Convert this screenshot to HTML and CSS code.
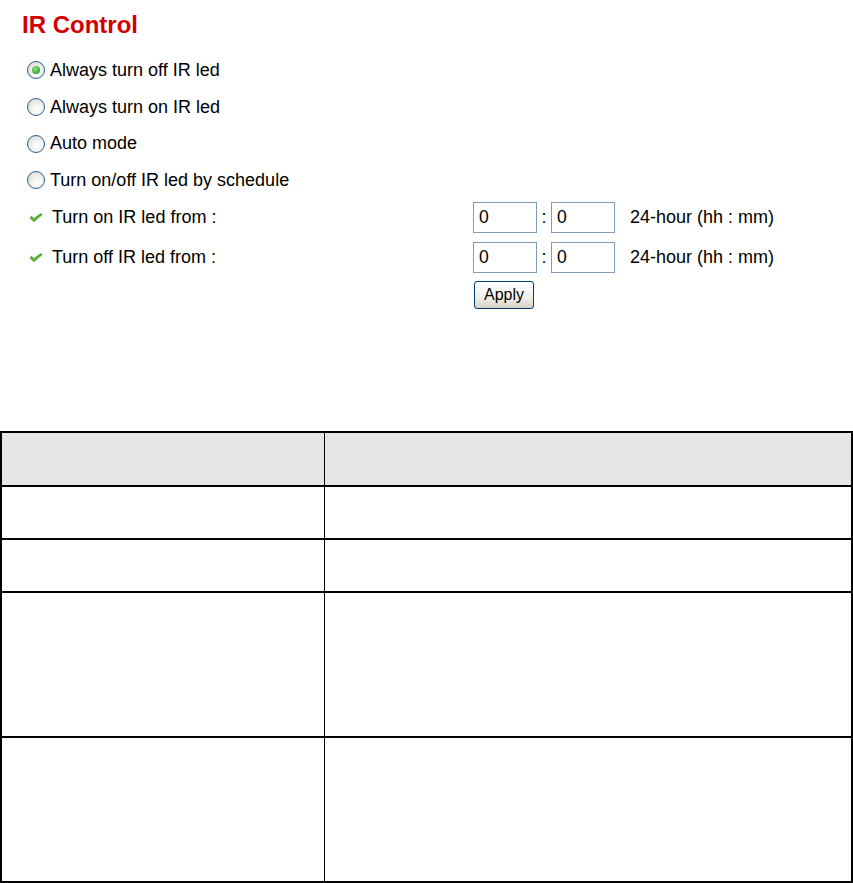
FILE: index.html
```html
<!DOCTYPE html>
<html lang="en">
<head>
    <meta charset="UTF-8">
    <title>IR Control</title>
    <link rel="stylesheet" href="styles.css">
</head>
<body>
    <section class="panel">
        <h1 class="title">IR Control</h1>
        <ul class="modes">
            <li><span class="radio checked"></span>Always turn off IR led</li>
            <li><span class="radio"></span>Always turn on IR led</li>
            <li><span class="radio"></span>Auto mode</li>
            <li><span class="radio"></span>Turn on/off IR led by schedule</li>
        </ul>
        <div class="sched-row">
            <span class="label">
                <svg class="check" width="14" height="10" viewBox="0 0 14 10"><path d="M0.8 4.8 L4.8 8.8 L13.2 1.8 L11.8 0.6 L4.8 5.6 L2.6 3.2 Z" fill="#5cb531" stroke="#3c8a1e" stroke-width="0.6"/></svg>
                Turn on IR led from :
            </span>
            <input class="time" type="text" value="0">
            <span class="colon">:</span>
            <input class="time" type="text" value="0">
            <span class="unit">24-hour (hh : mm)</span>
        </div>
        <div class="sched-row">
            <span class="label">
                <svg class="check" width="14" height="10" viewBox="0 0 14 10"><path d="M0.8 4.8 L4.8 8.8 L13.2 1.8 L11.8 0.6 L4.8 5.6 L2.6 3.2 Z" fill="#5cb531" stroke="#3c8a1e" stroke-width="0.6"/></svg>
                Turn off IR led from :
            </span>
            <input class="time" type="text" value="0">
            <span class="colon">:</span>
            <input class="time" type="text" value="0">
            <span class="unit">24-hour (hh : mm)</span>
        </div>
        <div class="apply-row">
            <button class="apply">Apply</button>
        </div>
    </section>
    <table class="desc">
        <tr class="head"><th></th><th></th></tr>
        <tr class="short"><td></td><td></td></tr>
        <tr class="short"><td></td><td></td></tr>
        <tr class="tall"><td></td><td></td></tr>
        <tr class="tall last"><td></td><td></td></tr>
    </table>
</body>
</html>
```

FILE: styles.css
```css
body {
    margin: 0;
    padding: 0;
    background: #fff;
    font-family: "Liberation Sans", Arial, sans-serif;
    color: #000;
}
.panel {
    padding: 11px 0 0 22px;
    height: 420px;
    box-sizing: border-box;
}
.title {
    margin: 0;
    font-size: 24px;
    line-height: 28px;
    font-weight: bold;
    color: #d40000;
}
.modes {
    list-style: none;
    margin: 13px 0 -1px 0;
    padding: 0;
}
.modes li {
    display: flex;
    align-items: center;
    height: 36.7px;
    font-size: 18px;
    padding-left: 5px;
}
.radio {
    width: 16px;
    height: 16px;
    border: 1px solid #2a5f8f;
    border-radius: 50%;
    margin-right: 5px;
    background: radial-gradient(circle at 60% 65%, #ffffff 0%, #f2f2ee 40%, #d4d4cc 100%);
    position: relative;
    flex: none;
}
.radio.checked::after {
    content: "";
    position: absolute;
    left: 4px;
    top: 4px;
    width: 8px;
    height: 8px;
    border-radius: 50%;
    background: radial-gradient(circle at 40% 35%, #9be08f 0%, #3fb43a 60%, #238a22 100%);
}
.sched-row {
    display: flex;
    align-items: center;
    height: 40px;
    font-size: 18px;
}
.label {
    display: flex;
    align-items: center;
    width: 451px;
    padding-left: 7px;
    box-sizing: border-box;
}
.check {
    margin-right: 9px;
}
.time {
    width: 64px;
    height: 31px;
    box-sizing: border-box;
    border: 1px solid #7f9db9;
    padding: 0 5px;
    font-family: "Liberation Sans", Arial, sans-serif;
    font-size: 17.5px;
    color: #000;
}
.colon {
    width: 14px;
    text-align: center;
}
.unit {
    margin-left: 15px;
}
.apply-row {
    display: flex;
    padding-left: 452px;
    margin-top: 3px;
}
.apply {
    width: 60px;
    height: 28px;
    font-family: "Liberation Sans", Arial, sans-serif;
    font-size: 16px;
    color: #000;
    border: 1px solid #003c74;
    border-radius: 3px;
    background: linear-gradient(#ffffff, #f0f0ea 60%, #d6d0c5);
    padding: 0;
}
.desc {
    border-collapse: collapse;
    width: 853px;
    margin-top: 11px;
    table-layout: fixed;
}
.desc th, .desc td {
    border-top: 2px solid #000;
    border-left: 1px solid #000;
    padding: 0;
}
.desc th:first-child, .desc td:first-child {
    width: 322px;
    border-left: 2px solid #000;
}
.desc th:last-child, .desc td:last-child {
    border-right: 2px solid #000;
}
.desc .head th {
    background: #e5e5e5;
    height: 52px;
}
.desc .short td {
    height: 51px;
}
.desc .tall td {
    height: 143px;
}
.desc .last td {
    border-bottom: 2px solid #000;
}
```
